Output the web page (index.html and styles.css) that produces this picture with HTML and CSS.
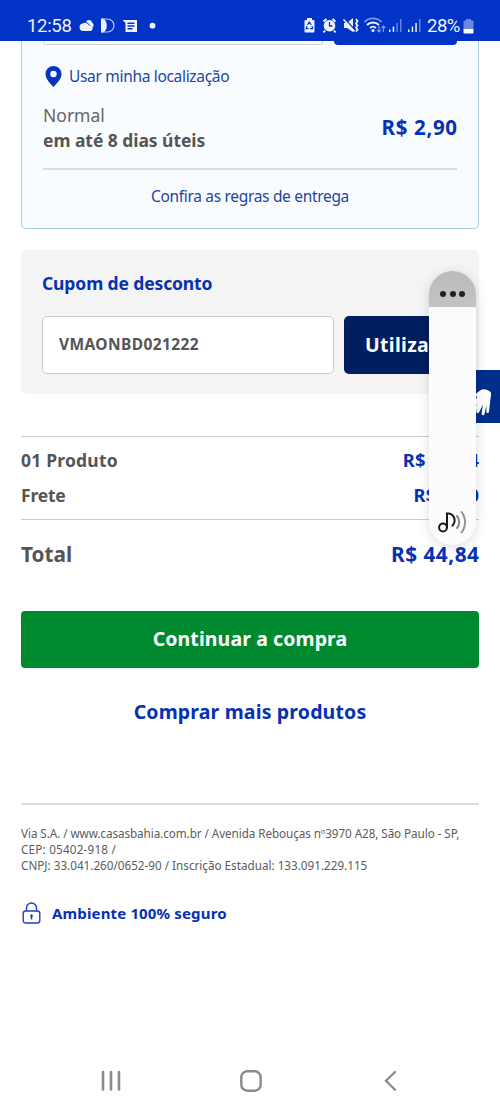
FILE: index.html
```html
<!DOCTYPE html>
<html lang="pt-BR">
<head>
<meta charset="utf-8">
<title>Carrinho</title>
<link rel="stylesheet" href="styles.css">
</head>
<body>
<div class="phone">
  <header class="status">
    <span class="clock">12:58</span>
    <svg class="status-left" width="80" height="18" viewBox="0 0 80 18" fill="#eef3ff">
      <path d="M5 15a3.800 3.800 0 0 1-.4-7.500A4.300 4.300 0 0 1 11 9.500a2.800 2.800 0 0 1 1.500 5.500z"/><path d="M8 6a3.100 3.100 0 0 1 6 .5 2.800 2.800 0 0 1 .2 5q-1-2.500-2.700-2.700Q10.200 6.500 8 6z"/>
      <path d="M23 2.500h2c5 2 5 12 0 14h-2z"/><path d="M23.500 3h6a6.500 6.500 0 0 1 0 13h-6" fill="none" stroke="#c3d0f5" stroke-width="1.200"/>
      <path fill-rule="evenodd" d="M44.500 4H59v12H47.500V7zM49.500 6.500v1.500h7V6.500zm0 2.800v1.500h7V9.300zm0 2.800v1.400h5v-1.400z"/>
      <circle cx="74.500" cy="9.700" r="2.900"/>
    </svg>
    <svg class="status-right" width="124" height="18" viewBox="0 0 124 18" fill="#eef3ff">
      <path fill-rule="evenodd" d="M4 2h5v2h1.500a1 1 0 0 1 1 1v10.500a1 1 0 0 1-1 1h-8a1 1 0 0 1-1-1V5a1 1 0 0 1 1-1H4z"/>
      <path d="M4.300 9l2-3 2 3M9 10.200l.6 2.500H7M5.500 12.700H3.200l.8-2.500" fill="none" stroke="#0636c8" stroke-width="1.200"/>
      <circle cx="26.500" cy="9.700" r="5.800"/><path d="M20.500 5.500l3-2.500M32.500 5.500l-3-2.500M22 14.500l-1.500 2M31 14.500l1.500 2" stroke="#eef3ff" stroke-width="2"/><path d="M26.500 6v4h3" fill="none" stroke="#0636c8" stroke-width="1.300"/>
      <path d="M41 7h3l6-5v14l-6-4h-3z"/><path d="M41.500 2.500l11 12" stroke="#0636c8" stroke-width="1.300"/><path d="M40.500 3.500l11 12" stroke="#eef3ff" stroke-width="1.600"/><path d="M53 3l1.500 2-1.500 2.500 1.500 2-1.500 2 1.500 2-1.500 2" fill="none" stroke="#eef3ff" stroke-width="1.800"/>
      <g fill="none" stroke="#eef3ff" stroke-width="1.800"><path d="M61.500 6a12 12 0 0 1 17 0" stroke="#7f98e8"/><path d="M64 9a8.500 8.500 0 0 1 12 0"/><path d="M67 12a4.500 4.500 0 0 1 6 0"/></g><circle cx="70" cy="14.500" r="1.500"/>
      <path d="M76 10v6m-2-2l2 2 2-2M80.500 16v-6m-2 2l2-2 2 2" fill="none" stroke="#7f98e8" stroke-width="1.200"/>
      <path d="M86 13.500h1.500V16H86zM89.700 10.500h1.500V16h-1.500z"/><path d="M93.300 7h1.500v9h-1.500zM97 3h1.500v13H97z" fill="#6683e0"/>
      <path d="M105 13.500h1.500V16H105zM108.700 10.500h1.500V16h-1.500zM112.300 7h1.500v9h-1.500z"/><path d="M116 3h1.500v13H116z" fill="#6683e0"/>
    </svg>
    <span class="percent">28%</span>
    <svg class="battery" width="11" height="16" viewBox="0 0 11 16"><path d="M3 1h5v1.500h1.500q1 0 1 1V11H.5V3.500q0-1 1-1H3z" fill="#6c88e4"/><path d="M.5 11h10v3.500q0 1-1 1h-8q-1 0-1-1z" fill="#fff"/></svg>
  </header>

  <main class="content">
    <section class="delivery">
      <div class="cep-row"><div class="cep-field"></div><div class="cep-button"></div></div>
      <a class="locate">
        <svg width="17" height="23" viewBox="0 0 17 23"><path fill="#0533c2" fill-rule="evenodd" d="M8.500 1A8 8 0 0 0 .5 9c0 5.200 5 9.500 8 13 3-3.500 8-7.800 8-13a8 8 0 0 0-8-8zm0 4.800a3.200 3.200 0 1 1 0 6.400 3.200 3.200 0 0 1 0-6.400z"/></svg>
        <span class="t-locate">Usar minha localização</span>
      </a>
      <div class="shipping">
        <div><div class="ship-kind">Normal</div><div class="ship-time">em até 8 dias úteis</div></div>
        <div class="ship-price">R$ 2,90</div>
      </div>
      <a class="rules"><span class="t-rules">Confira as regras de entrega</span></a>
    </section>

    <section class="coupon">
      <h2 class="coupon-title">Cupom de desconto</h2>
      <div class="coupon-row">
        <div class="coupon-input">VMAONBD021222</div>
        <div class="coupon-button">Utilizar</div>
      </div>
    </section>

    <section class="summary">
      <div class="row"><span class="t-products">01 Produto</span><span class="amount">R$ 41,94</span></div>
      <div class="row"><span class="t-freight">Frete</span><span class="amount">R$ 2,90</span></div>
    </section>
    <div class="total"><span class="t-total">Total</span><span class="t-sum">R$ 44,84</span></div>
    <div class="continue"><span class="t-continue">Continuar a compra</span></div>
    <div class="more"><span class="t-more">Comprar mais produtos</span></div>

    <footer class="legal">
      <div class="l1">Via S.A. / www.casasbahia.com.br / Avenida Rebouças nº3970 A28, São Paulo - SP,</div>
      <div class="l2">CEP: 05402-918 /</div>
      <div class="l3">CNPJ: 33.041.260/0652-90 / Inscrição Estadual: 133.091.229.115</div>
    </footer>
    <div class="secure">
      <svg width="19" height="22" viewBox="0 0 19 22" fill="none" stroke="#1a44bd" stroke-width="1.400"><rect x="1.200" y="9" width="16.600" height="12" rx="2.500"/><path d="M4.500 9V6a5 5 0 0 1 10 0v3"/><path d="M9.500 14v3.500" stroke-width="1.500"/><circle cx="9.500" cy="13.700" r="1" fill="#1a44bd" stroke-width=".8"/></svg>
      <span class="t-secure">Ambiente 100% seguro</span>
    </div>
  </main>

  <nav class="nav">
    <svg width="20" height="22" viewBox="0 0 20 22" stroke="#8b8b8b" stroke-width="2.600" stroke-linecap="round"><path d="M2 2v17.500M10 2v17.500M18 2v17.500"/></svg>
    <svg class="home" width="22" height="22" viewBox="0 0 22 22" fill="none" stroke="#8b8b8b" stroke-width="2.400"><rect x="1.300" y="1.300" width="19.400" height="19.400" rx="6"/></svg>
    <svg width="13" height="22" viewBox="0 0 13 22" fill="none" stroke="#8b8b8b" stroke-width="2.300" stroke-linecap="round"><path d="M11 2L2 10.700l9 9"/></svg>
  </nav>

  <div class="hands">
    <svg width="25" height="52" viewBox="0 0 25 52" fill="#fff"><path d="M0 24.500l5-4c3-2 6-1.500 10 1 1.500 1 1.300 3 .5 7l-1.500 13c-.3 2.300-2.800 2-2.700-.3l.2-6.200-2 9c-.6 2-3.200 1.400-2.900-.7l1.300-8.500-3.800 7.500c-1.200 1.800-3.200.7-2.600-1.100l2-5.200L0 44z"/><path d="M0 26.500q3-1 1.500 2L0 31zM0 36l2-2-2 4z" fill="#012d8c"/></svg>
  </div>
  <div class="volume">
    <div class="volume-top"><i></i><i></i><i></i></div>
    <svg class="note" width="30" height="26" viewBox="0 0 30 26" fill="none" stroke="#171717" stroke-width="2" stroke-linecap="round"><circle cx="5" cy="18.500" r="3.900"/><path d="M9 18V4.500h2c5.500 1 7.500 8 3.500 12"/><path d="M19 7c3 3.500 3 8.500 0 12" stroke="#888"/><path d="M23.500 3c4.700 6 4.700 14.500 0 20.500" stroke="#929292"/></svg>
  </div>
</div>
</body>
</html>
```

FILE: styles.css
```css
* { box-sizing: border-box; }
body { margin: 0; background: #fff; }
svg { display: block; flex: none; }
.phone { position: relative; width: 500px; height: 1111px; overflow: hidden; display: flex; flex-direction: column; background: #fff; font-family: "Noto Sans", "Open Sans", sans-serif; color: #555; white-space: nowrap; }
.status { height: 41px; flex: none; background: #0033c6; color: #eef3ff; display: flex; align-items: flex-start; padding: 16px 0 0 27px; font: 18.500px/20px Roboto, sans-serif; }
.clock { width: 51px; letter-spacing: -0.300px; }
.status-right { margin-left: 145px; }
.percent { width: 36px; letter-spacing: -0.500px; }
.battery { margin-top: 2px; }
.content { flex: 1; padding: 0 21px; }

.delivery { height: 188px; padding: 0 21px; background: #f9fcff; border: 1px solid #a8d0df; border-top: 0; border-radius: 0 0 5px 5px; }
.cep-row { height: 4px; display: flex; gap: 11px; }
.cep-field { width: 280px; border: 1px solid #d2d2d2; border-top: 0; border-radius: 0 0 5px 5px; background: #fff; }
.cep-button { width: 123px; background: #0033c6; border-radius: 0 0 5px 5px; }
.locate { display: flex; align-items: center; gap: 7px; height: 24px; margin: 19px 0 0 2px; color: #1f459f; font-size: 15.500px; letter-spacing: -0.320px; }
.shipping { display: flex; justify-content: space-between; align-items: center; height: 82px; padding-bottom: 1px; border-bottom: 2px solid #dcdedd; }
.ship-kind { font-size: 17.500px; line-height: 25px; color: #666; }
.ship-time { font-size: 17.500px; line-height: 25px; font-weight: 700; letter-spacing: -0.050px; }
.ship-price { font-size: 20.500px; font-weight: 700; letter-spacing: .65px; margin-right: -.65px; padding-bottom: 2px; color: #0631b4; }
.rules { display: flex; justify-content: center; align-items: center; height: 53px; padding-bottom: 2px; color: #1f459f; font-size: 15.500px; letter-spacing: -0.320px; }

.coupon { margin-top: 21px; height: 144px; padding: 20px 21px; background: #f4f4f4; border-radius: 5px; }
.coupon-title { margin: 0; font-size: 17.500px; line-height: 26px; letter-spacing: -0.120px; color: #0631b4; }
.coupon-row { display: flex; gap: 10px; margin-top: 20px; height: 58px; }
.coupon-input { width: 292px; padding-left: 16px; border: 1px solid #ccc; border-radius: 5px; background: #fff; font-size: 15.500px; line-height: 55px; font-weight: 700; letter-spacing: .4px; }
.coupon-button { width: 114px; padding-left: 21px; border-radius: 5px; background: #001e60; color: #fff; font-size: 19.500px; line-height: 58px; font-weight: 700; letter-spacing: .3px; }

.summary { margin-top: 42px; height: 84px; padding-top: 6px; border: solid #ccc; border-width: 1px 0; }
.row { display: flex; justify-content: space-between; height: 35px; line-height: 35px; font-size: 17.500px; font-weight: 700; }
.t-products { letter-spacing: .2px; }
.t-freight { letter-spacing: -.2px; }
.amount { font-size: 18.300px; line-height: 33px; letter-spacing: .3px; margin-right: -.3px; color: #0631b4; }
.total { display: flex; justify-content: space-between; height: 70px; line-height: 69px; font-size: 20.800px; font-weight: 700; }
.t-sum { letter-spacing: .5px; margin-right: -.5px; color: #0631b4; }
.continue { display: flex; justify-content: center; align-items: center; margin-top: 21px; height: 57px; padding-bottom: 2px; border-radius: 4px; background: #008a30; color: #fff; font-size: 19.500px; font-weight: 700; letter-spacing: .1px; }
.more { display: flex; justify-content: center; align-items: center; height: 89px; padding-bottom: 2px; color: #0631b4; font-size: 19.500px; font-weight: 700; letter-spacing: .15px; }

.legal { margin-top: 46px; padding-top: 20px; border-top: 2px solid #ddd; font-size: 11.700px; line-height: 16px; color: #5c5c5c; }
.l1 { letter-spacing: -.07px; }
.l2 { letter-spacing: .2px; }
.secure { display: flex; align-items: center; gap: 11px; height: 24px; margin: 28px 0 0 1px; font-size: 15px; font-weight: 700; letter-spacing: .15px; color: #0631b4; }

.nav { height: 61px; flex: none; display: flex; align-items: center; justify-content: space-between; padding: 0 103px 0 101px; }
.home { margin-right: 3px; }

.hands { position: absolute; left: 475px; top: 370px; width: 25px; height: 53px; background: #012d8c; }
.volume { position: absolute; left: 429px; top: 271px; width: 47px; height: 274px; border-radius: 24px; overflow: hidden; background: #fcfcfc; }
.volume { box-shadow: 0 2px 12px rgba(0, 0, 0, .14); }
.volume-top { display: flex; align-items: center; justify-content: center; gap: 3.500px; height: 36px; padding-top: 9px; background: linear-gradient(#bababa, #c4c4c4); }
.volume-top i { width: 6px; height: 6px; border-radius: 50%; background: #202020; }
.note { margin: 202px 0 0 9px; }
```
